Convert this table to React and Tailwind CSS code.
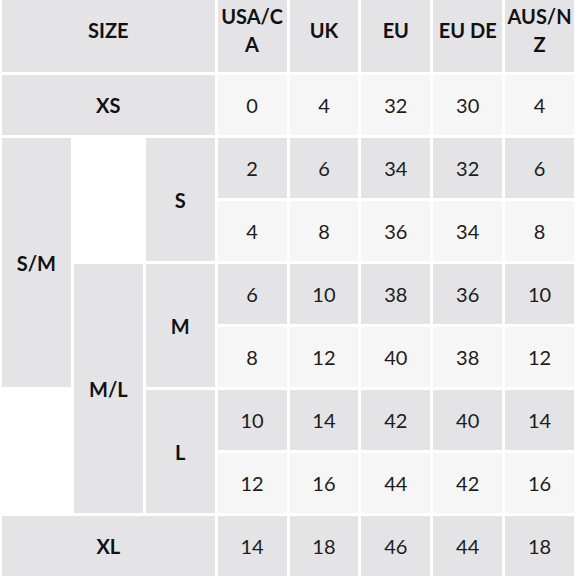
import React from "react";

const headers = ["USA/CA", "UK", "EU", "EU DE", "AUS/NZ"];

const rows = [
  ["0", "4", "32", "30", "4"],
  ["2", "6", "34", "32", "6"],
  ["4", "8", "36", "34", "8"],
  ["6", "10", "38", "36", "10"],
  ["8", "12", "40", "38", "12"],
  ["10", "14", "42", "40", "14"],
  ["12", "16", "44", "42", "16"],
  ["14", "18", "46", "44", "18"],
];

const grey = "bg-[#e4e4e6]";
const light = "bg-[#f6f6f6]";

const Label = ({ className, children }) => (
  <div
    className={`${grey} flex items-center justify-center font-bold text-[20px] leading-7 text-[#111] ${className}`}
  >
    {children}
  </div>
);

export default function App() {
  return (
    <div
      className="w-[580px] h-[580px] bg-white overflow-hidden"
      style={{ fontFamily: "Lato, 'Open Sans', sans-serif" }}
    >
      <div className="ml-[2px] w-[572px] grid grid-cols-[repeat(8,minmax(0,1fr))] grid-rows-[72px_repeat(8,60px)] gap-[3px]">
        {/* header */}
        <Label className="col-start-1 col-span-3 row-start-1 pb-3">SIZE</Label>
        {headers.map((h, i) => (
          <div
            key={h}
            style={{ gridColumnStart: i + 4 }}
            className={`${grey} row-start-1 flex items-center justify-center pb-3 px-[1px] text-center font-bold text-[20px] leading-7 text-[#111] break-all`}
          >
            {h}
          </div>
        ))}

        {/* size labels */}
        <Label className="col-start-1 col-span-3 row-start-2">XS</Label>
        <Label className="col-start-1 row-start-3 row-span-4">S/M</Label>
        <Label className="col-start-2 row-start-5 row-span-4">M/L</Label>
        <Label className="col-start-3 row-start-3 row-span-2">S</Label>
        <Label className="col-start-3 row-start-5 row-span-2">M</Label>
        <Label className="col-start-3 row-start-7 row-span-2">L</Label>
        <Label className="col-start-1 col-span-3 row-start-9">XL</Label>

        {/* values */}
        {rows.map((r, ri) =>
          r.map((v, ci) => (
            <div
              key={`${ri}-${ci}`}
              style={{ gridRowStart: ri + 2, gridColumnStart: ci + 4 }}
              className={`${ri % 2 === 0 ? light : grey} flex items-center justify-center text-[20px] leading-7 text-[#1c1c1c]`}
            >
              {v}
            </div>
          ))
        )}
      </div>
    </div>
  );
}
